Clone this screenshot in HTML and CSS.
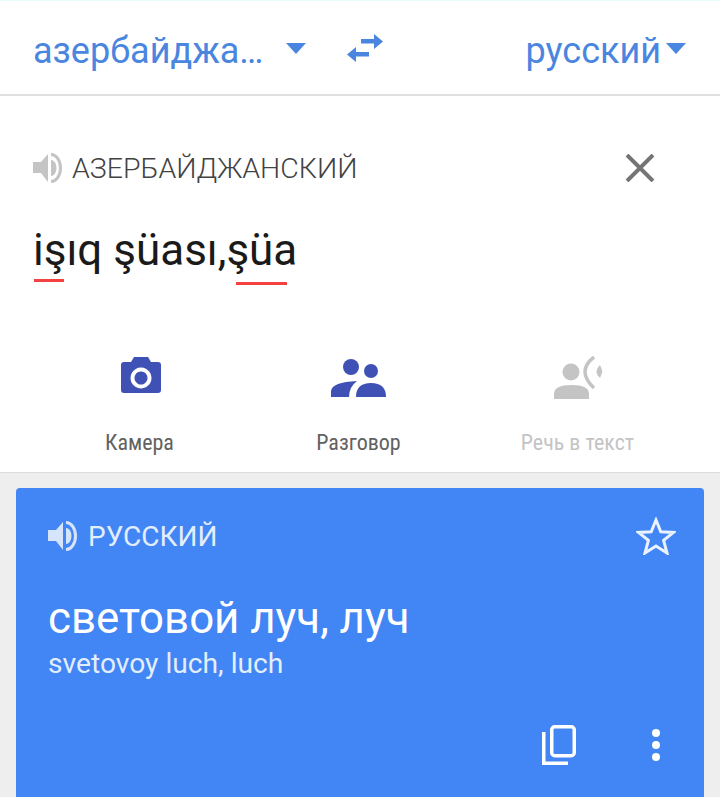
FILE: index.html
```html
<!DOCTYPE html>
<html lang="ru">
<head>
  <meta charset="UTF-8" />
  <meta name="viewport" content="width=device-width, initial-scale=1" />
  <title>Переводчик</title>
  <link rel="stylesheet" href="styles.css">
</head>
<body>

  <!-- Language bar -->
  <div class="lang-bar">
    <div class="lang lang-from">
      <span class="lang-name">азербайджа…</span>
      <span class="caret"></span>
    </div>
    <svg class="swap" viewBox="0 0 36 28" aria-hidden="true">
      <path d="M14 5 H27 V0 L36 7.500 L27 15 V9.500 H14 Z" fill="#4a86e0"/>
      <path d="M22 18 H9 V13 L0 20.500 L9 28 V22.500 H22 Z" fill="#4a86e0"/>
    </svg>
    <div class="lang lang-to">
      <span class="lang-name">русский</span>
      <span class="caret"></span>
    </div>
  </div>

  <!-- Source text -->
  <div class="source">
    <div class="source-head">
      <svg class="speaker" viewBox="0 0 30 30" aria-hidden="true">
        <path d="M0 9 H8 L15 1 V29 L8 20 H0 Z" fill="#c4c4c4"/>
        <path d="M18 7 A5.500 8 0 0 1 18 23 Z" fill="#c4c4c4"/>
        <path d="M18 1.500 A9.500 13.500 0 0 1 18 28.500" fill="none" stroke="#c4c4c4" stroke-width="3"/>
      </svg>
      <span class="source-lang">АЗЕРБАЙДЖАНСКИЙ</span>
      <svg class="close" viewBox="0 0 30 28" aria-hidden="true">
        <path d="M2 1 L28 27 M28 1 L2 27" stroke="#757575" stroke-width="4" fill="none"/>
      </svg>
    </div>
    <div class="source-text"><span class="typo typo-one">işı</span>q şüası,<span class="typo typo-two">şüa</span></div>

    <!-- Input modes -->
    <div class="tools">
      <div class="tool">
        <svg class="tool-icon" viewBox="0 0 56 44" aria-hidden="true">
          <path fill-rule="evenodd" fill="#3f51b5" d="M12 6 H19 L22 1 H36 L39 6 H46 Q49 6 49 9 V34 Q49 37 46 37 H12 Q9 37 9 34 V9 Q9 6 12 6 Z M29 11.500 A10.500 10.500 0 1 0 29.010 11.500 Z M29 15.500 A6.500 6.500 0 1 1 28.990 15.500 Z"/>
        </svg>
        <span>Камера</span>
      </div>
      <div class="tool">
        <svg class="tool-icon" viewBox="0 0 56 44" aria-hidden="true">
          <circle cx="20" cy="11" r="8" fill="#3f51b5"/>
          <circle cx="40" cy="15" r="7" fill="#3f51b5"/>
          <path fill="#3f51b5" d="M0 41 V35 Q1 26 26 25 Q18 31 18 41 Z"/>
          <path fill="#3f51b5" d="M25 41 Q25 27 40 27 Q55 27 55 41 Z"/>
        </svg>
        <span>Разговор</span>
      </div>
      <div class="tool tool-off">
        <svg class="tool-icon" viewBox="0 0 56 44" aria-hidden="true">
          <circle cx="21" cy="16" r="8.500" fill="#c4c4c4"/>
          <path fill="#c4c4c4" d="M4 43 V38 Q4 29 21.500 29 Q39 29 39 38 V43 Z"/>
          <path d="M44 1 Q26 15 44 32" fill="none" stroke="#c4c4c4" stroke-width="3.500"/>
          <path fill="#c4c4c4" d="M50 9 Q43 15.500 50 22 L52 17 Q52.500 15 52 14 Z"/>
        </svg>
        <span>Речь в текст</span>
      </div>
    </div>
  </div>

  <!-- Translation card -->
  <div class="result-wrap">
    <div class="result">
      <div class="result-head">
        <svg class="speaker" viewBox="0 0 30 30" aria-hidden="true">
          <path d="M0 9 H8 L15 1 V29 L8 20 H0 Z" fill="#d6e5fc"/>
          <path d="M18 7 A5.500 8 0 0 1 18 23 Z" fill="#d6e5fc"/>
          <path d="M18 1.500 A9.500 13.500 0 0 1 18 28.500" fill="none" stroke="#d6e5fc" stroke-width="3"/>
        </svg>
        <span class="result-lang">РУССКИЙ</span>
        <svg class="star" viewBox="0 0 40 38" aria-hidden="true">
          <path d="M20 3 L24.800 14.800 L37.500 15.400 L27.600 23.300 L31 36 L20 29 L9 36 L12.400 23.300 L2.500 15.400 L15.200 14.800 Z" fill="none" stroke="#eaf2fe" stroke-width="3"/>
        </svg>
      </div>
      <div class="result-text">световой луч, луч</div>
      <div class="result-translit">svetovoy luch, luch</div>
      <div class="result-actions">
        <svg class="copy" viewBox="0 0 34 40" aria-hidden="true">
          <path d="M1.750 7 V38.250 H26" fill="none" stroke="#fff" stroke-width="3.500"/>
          <rect x="9.750" y="1.750" width="22.500" height="29" rx="3" fill="none" stroke="#fff" stroke-width="3.500"/>
        </svg>
        <div class="dots"><i></i><i></i><i></i></div>
      </div>
    </div>
  </div>

</body>
</html>
```

FILE: styles.css
```css
html, body {
  height: 100%;
}

body {
  margin: 0;
  background: #fff;
  font-family: Roboto, sans-serif;
  overflow: hidden;
  display: flex;
  flex-direction: column;
}

.lang-bar {
  flex: none;
  height: 93px;
  border-top: 1px solid #e8fbfb;
  border-bottom: 2px solid #e0e0e0;
  display: flex;
  align-items: flex-start;
  padding: 0 34px 0 33px;
  color: #4a86e0;
}

.lang {
  display: flex;
  align-items: flex-start;
  padding-top: 29px;
}

.lang-name {
  font-size: 36px;
  line-height: 42px;
}

.caret {
  width: 0;
  height: 0;
  border-left: 10px solid transparent;
  border-right: 10px solid transparent;
  border-top: 11px solid #4a86e0;
  margin-top: 13px;
}

.lang-from .caret {
  margin-left: 23px;
}

.lang-to {
  margin-left: auto;
}

.lang-to .caret {
  margin-left: 5px;
}

.swap {
  width: 36px;
  height: 28px;
  margin: 33px 0 0 41px;
}

.source {
  flex: none;
  height: 376px;
  border-bottom: 1px solid #dcdcdc;
  padding: 0 65px 0 33px;
}

.source-head {
  display: flex;
  align-items: center;
  margin-top: 57px;
  height: 30px;
}

.speaker {
  width: 30px;
  height: 30px;
  flex: none;
}

.source-lang {
  margin-left: 9px;
  font-size: 28.5px;
  font-weight: 300;
  color: #424242;
}

.close {
  margin-left: auto;
  width: 30px;
  height: 28px;
}

.source-text {
  margin-top: 37px;
  font-size: 44px;
  line-height: 60px;
  color: #1a1a1a;
}

.typo {
  position: relative;
}

.typo::after {
  content: "";
  position: absolute;
  height: 3px;
  background: #f44242;
}

.typo-one::after {
  left: 1px;
  width: 30px;
  bottom: -6px;
}

.typo-two::after {
  left: 10px;
  width: 51px;
  bottom: -9px;
}

.tools {
  display: grid;
  grid-template-columns: repeat(3, 219px);
  margin: 76px 0 0 -3px;
}

.tool {
  display: flex;
  flex-direction: column;
  align-items: center;
  font-size: 22px;
  font-stretch: 75%;
  color: #616161;
}

.tool-off {
  color: #c4c4c4;
}

.tool-icon {
  width: 56px;
  height: 44px;
  margin-bottom: 30px;
}

.result-wrap {
  flex: 1;
  min-height: 0;
  background: #eee;
  padding: 15px 16px 0;
}

.result {
  height: 100%;
  background: #4285f4;
  border-radius: 4px 4px 0 0;
  padding: 0 28px 0 32px;
  box-sizing: border-box;
  color: #fff;
}

.result-head {
  display: flex;
  align-items: center;
  padding-top: 29px;
}

.result-lang {
  margin-left: 10px;
  font-size: 28px;
  color: #e3eefc;
}

.star {
  margin-left: auto;
  width: 40px;
  height: 38px;
}

.result-text {
  margin-top: 37px;
  font-size: 43.800px;
  line-height: 52px;
}

.result-translit {
  margin-top: 3px;
  font-size: 28.200px;
  line-height: 34px;
  color: #e3eefc;
}

.result-actions {
  display: flex;
  align-items: center;
  justify-content: flex-end;
  gap: 76px;
  margin-top: 44px;
}

.copy {
  width: 34px;
  height: 40px;
}

.dots {
  display: flex;
  flex-direction: column;
  gap: 4px;
  margin-right: 16px;
}

.dots i {
  width: 8px;
  height: 8px;
  border-radius: 50%;
  background: #fff;
}
```
